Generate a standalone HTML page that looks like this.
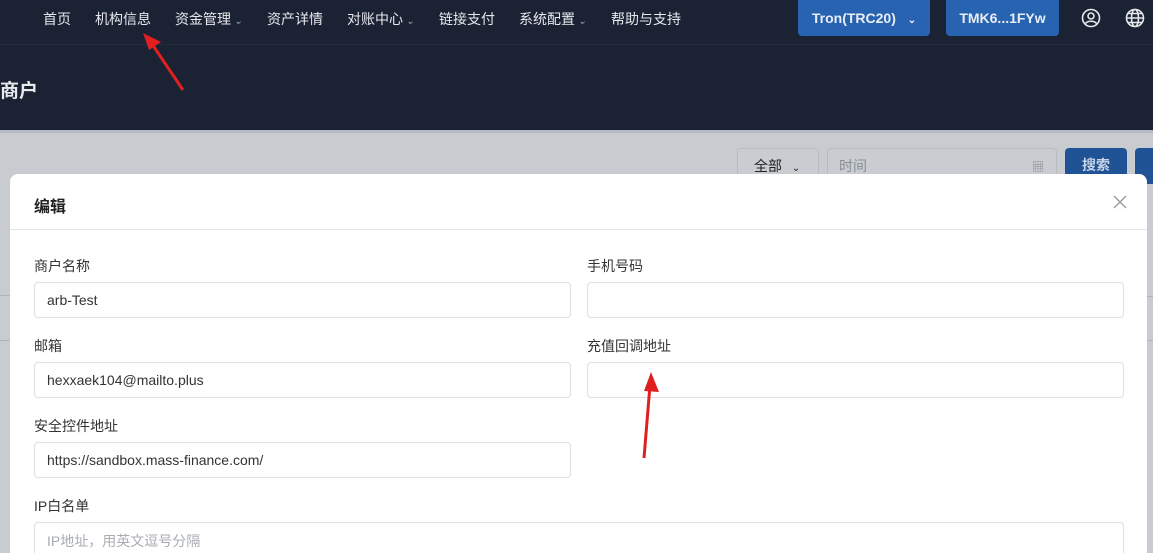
<!DOCTYPE html>
<html style="width:1153px;height:553px;overflow:hidden"><head><meta charset="utf-8"><style>
*{box-sizing:border-box;margin:0;padding:0}
body{width:1153px;height:553px;overflow:hidden;position:relative;background:#c8ccd0;font-family:"Liberation Sans","Noto Sans CJK SC",sans-serif}
.nav{position:absolute;left:0;top:0;width:1153px;height:45px;background:#1a2233;border-bottom:1px solid #232c3d}
.nav span{position:absolute;top:9px;color:#e6e8ec;font-size:14px}
.car{font-size:10px;color:#9aa;margin-left:3px}
.hdr{position:absolute;left:0;top:45px;width:1153px;height:85px;background:#1a2233}
.btn{position:absolute;top:0;height:36px;background:#2763b0;border-radius:0 0 4px 4px;color:#e8eef8;font-size:14px;font-weight:bold;text-align:center;line-height:36px}
.gline{position:absolute;top:130px;left:0;width:1153px;height:3px;background:#b4bac2}
.sel{position:absolute;top:148px;height:36px;border:1px solid #b8bcc0;border-radius:4px;background:#c9cdd1;font-size:14px}
.modal{position:absolute;left:10px;top:174px;width:1137px;height:379px;background:#fff;border-radius:8px 8px 0 0;overflow:hidden}
.mh{height:56px;border-bottom:1px solid #e3e5e8;padding:19px 24px;font-size:16px;font-weight:bold;color:#222}
.lab{position:absolute;font-size:14px;color:#333}
.inp{position:absolute;height:36px;border:1px solid #dcdfe3;border-radius:4px;font-size:14px;color:#333;padding:9px 12px}
</style></head><body>
<div class="nav">
<span style="left:43px">首页</span>
<span style="left:95px">机构信息</span>
<span style="left:175px">资金管理<i class="car">⌄</i></span>
<span style="left:267px">资产详情</span>
<span style="left:347px">对账中心<i class="car">⌄</i></span>
<span style="left:439px">链接支付</span>
<span style="left:519px">系统配置<i class="car">⌄</i></span>
<span style="left:611px">帮助与支持</span>
</div>
<div class="btn" style="left:798px;width:132px">Tron(TRC20) <span style="font-size:10px;margin-left:8px">⌄</span></div>
<div class="btn" style="left:946px;width:113px">TMK6...1FYw</div>
<svg style="position:absolute;left:1081px;top:8px" width="20" height="20" viewBox="0 0 20 20" fill="none" stroke="#e6e8ec" stroke-width="1.6"><circle cx="10" cy="10" r="8.5"/><circle cx="10" cy="8" r="3"/><path d="M4.5 15.5c2-3 9-3 11 0"/></svg>
<svg style="position:absolute;left:1125px;top:8px" width="20" height="20" viewBox="0 0 20 20" fill="none" stroke="#e6e8ec" stroke-width="1.6"><circle cx="10" cy="10" r="8.5"/><ellipse cx="10" cy="10" rx="3.5" ry="8.5"/><path d="M1.5 10h17M3 5.5h14M3 14.5h14"/></svg>
<div class="hdr"></div>
<b style="position:absolute;left:0;top:76px;color:#e8eaee;font-size:19px">商户</b>
<div class="gline"></div>
<div class="sel" style="left:737px;width:82px;padding:7px 16px;color:#222">全部 <span style="font-size:10px;margin-left:6px">⌄</span></div>
<div class="sel" style="left:827px;width:230px;padding:7px 11px;color:#8a8f96">时间<span style="position:absolute;right:12px;top:9px;font-size:12px">▦</span></div>
<div class="btn" style="top:148px;left:1065px;width:62px;height:36px;border-radius:4px;background:#1f5396;color:#c8d4e6;line-height:34px">搜索</div>
<div class="btn" style="top:148px;left:1135px;width:18px;height:36px;border-radius:4px 0 0 4px;background:#1f5396"></div>
<div style="position:absolute;left:0;top:295px;width:10px;height:1px;background:#b0b5ba"></div>
<div style="position:absolute;left:0;top:340px;width:10px;height:1px;background:#b0b5ba"></div>
<div style="position:absolute;left:1147px;top:296px;width:6px;height:1px;background:#b0b5ba"></div>
<div style="position:absolute;left:1147px;top:340px;width:6px;height:1px;background:#b0b5ba"></div>
<div class="modal">
<div class="mh">编辑</div>
<svg style="position:absolute;left:1103px;top:21px" width="14" height="14" viewBox="0 0 14 14" stroke="#999" stroke-width="1.3"><path d="M1 1l12 12M13 1L1 13"/></svg>
<div class="lab" style="left:24px;top:82px">商户名称</div>
<div class="inp" style="left:24px;top:108px;width:537px">arb-Test</div>
<div class="lab" style="left:577px;top:82px">手机号码</div>
<div class="inp" style="left:577px;top:108px;width:537px"></div>
<div class="lab" style="left:24px;top:162px">邮箱</div>
<div class="inp" style="left:24px;top:188px;width:537px">hexxaek104@mailto.plus</div>
<div class="lab" style="left:577px;top:162px">充值回调地址</div>
<div class="inp" style="left:577px;top:188px;width:537px"></div>
<div class="lab" style="left:24px;top:242px">安全控件地址</div>
<div class="inp" style="left:24px;top:268px;width:537px">https://sandbox.mass-finance.com/</div>
<div class="lab" style="left:24px;top:322px">IP白名单</div>
<div class="inp" style="left:24px;top:348px;width:1090px;height:31px;color:#a8acb2;padding-top:8px;border-bottom:none;border-radius:4px 4px 0 0">IP地址，用英文逗号分隔</div>
</div>
<svg style="position:absolute;left:0;top:0" width="1153" height="553"><g stroke="#e02020" stroke-width="3" fill="#e02020"><path d="M183 90L152 44" /><path d="M143 33l18 9-12 8z" stroke="none"/><path d="M644 458L650 385"/><path d="M651 372l8 20-15-1z" stroke="none"/></g></svg>
</body></html>
